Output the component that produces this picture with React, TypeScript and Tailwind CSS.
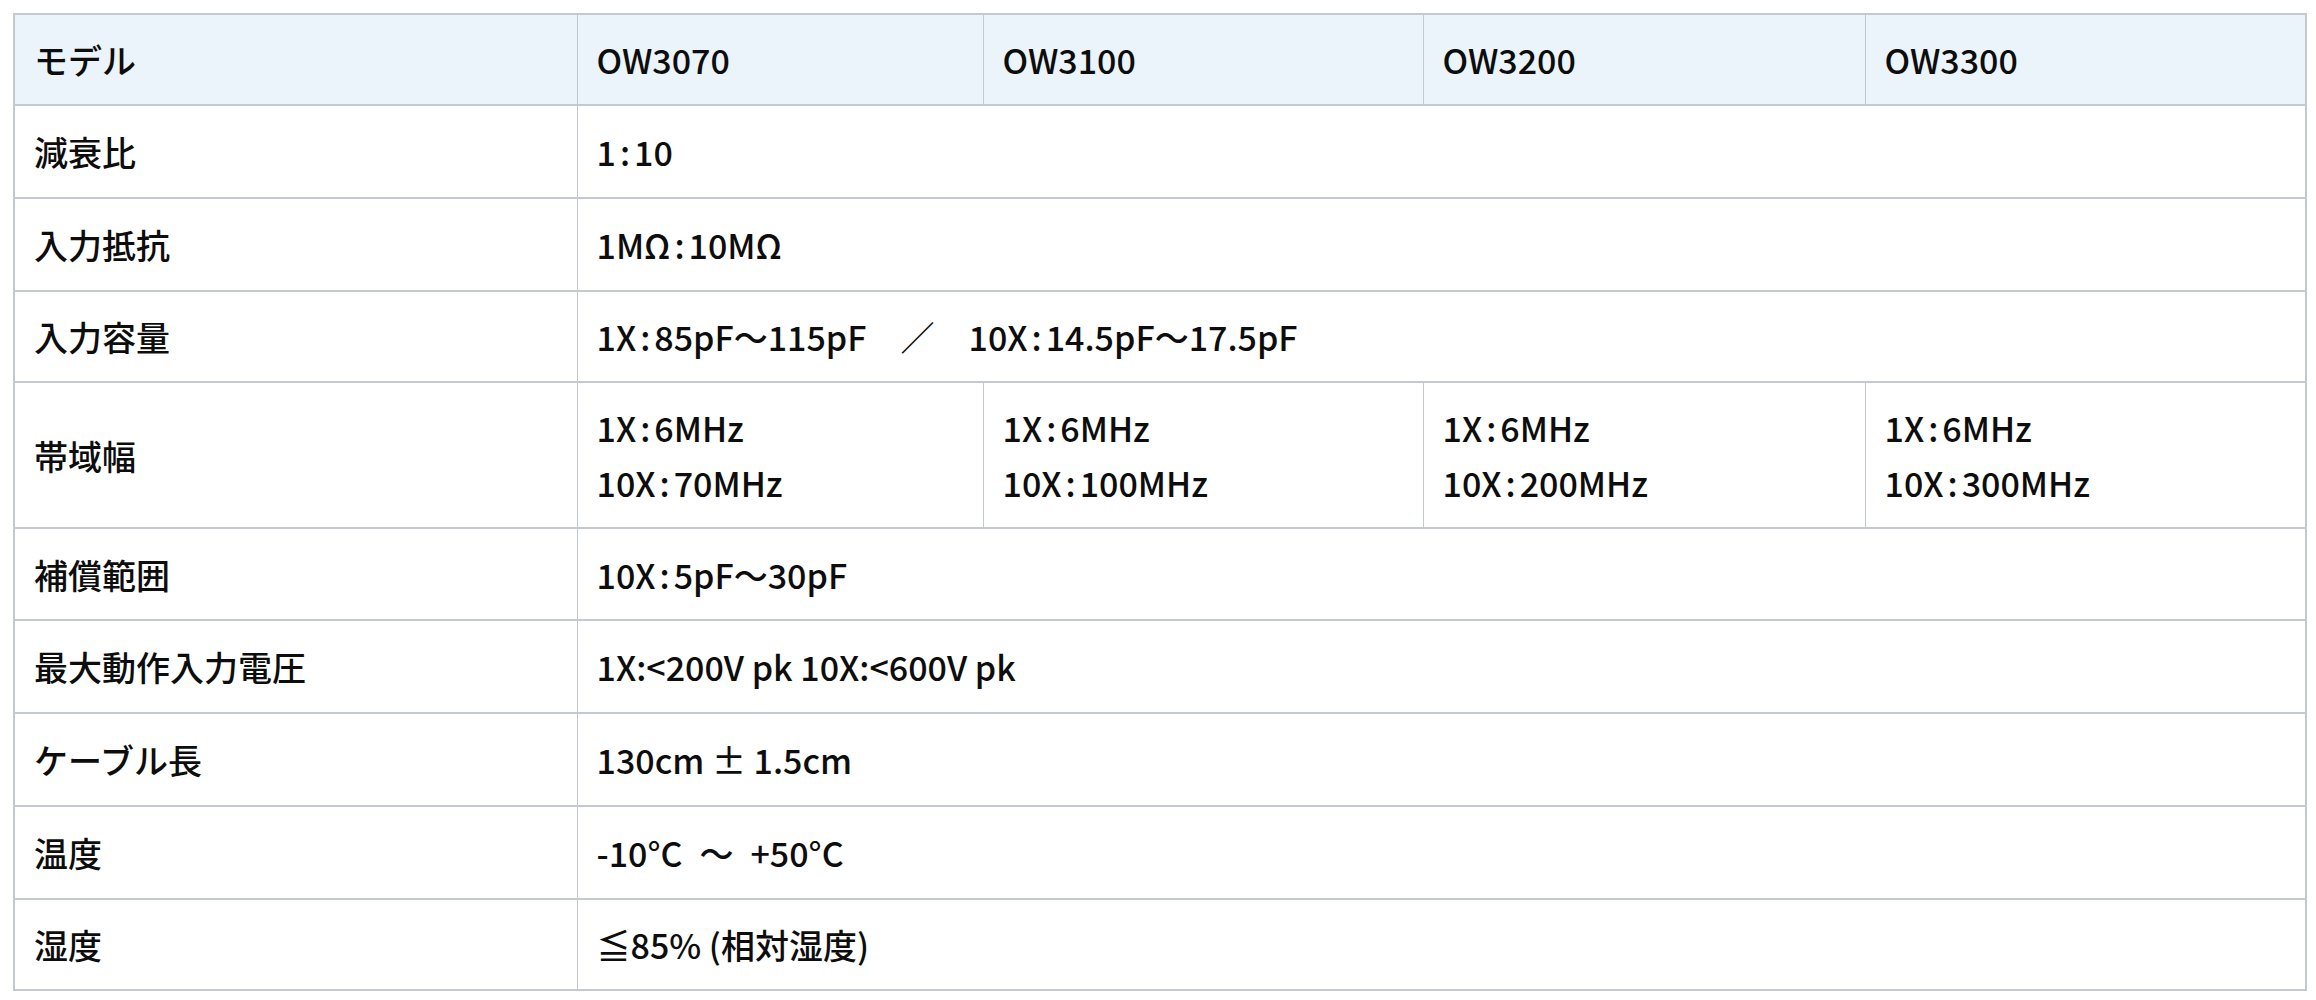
import React from "react";

const models = ["OW3070", "OW3100", "OW3200", "OW3300"];

// spec rows: label + either one value spanning all models, or one per model
const specs: {
  label: string;
  value?: string;
  perModel?: string[][];
  h: string;
  tight?: boolean;
}[] = [
  { label: "減衰比", value: "1:10", h: "h-[93px]" },
  { label: "入力抵抗", value: "1MΩ:10MΩ", h: "h-[93px]" },
  { label: "入力容量", value: "1X:85pF～115pF　／　10X:14.5pF～17.5pF", h: "h-[91px]" },
  {
    label: "帯域幅",
    perModel: [
      ["1X:6MHz", "10X:70MHz"],
      ["1X:6MHz", "10X:100MHz"],
      ["1X:6MHz", "10X:200MHz"],
      ["1X:6MHz", "10X:300MHz"],
    ],
    h: "h-[146px]",
  },
  { label: "補償範囲", value: "10X:5pF～30pF", h: "h-[92px]" },
  { label: "最大動作入力電圧", value: "1X:<200V pk 10X:<600V pk", h: "h-[93px]", tight: true },
  { label: "ケーブル長", value: "130cm ± 1.5cm", h: "h-[93px]" },
  { label: "温度", value: "-10°C\u2002～\u2002+50°C", h: "h-[93px]" },
  { label: "湿度", value: "≦85% (相対湿度)", h: "h-[91px]" },
];

const cell = "border-y-2 border-x border-[#c4c8cf] pl-[19px] align-middle";

// half-width colons in the source sit with a little air around them
const Spaced = ({ text, tight }: { text: string; tight?: boolean }) => {
  if (tight) return <>{text}</>;
  const parts = text.split(":");
  return (
    <>
      {parts.map((p, i) => (
        <React.Fragment key={i}>
          {i > 0 && <span className="mx-[4px]">:</span>}
          {p}
        </React.Fragment>
      ))}
    </>
  );
};

const App = () => {
  return (
    <div className="min-h-screen bg-white pt-[13px] pl-[13px] text-[34px] leading-[55px] font-medium text-[#0d0d0d] font-['Noto_Sans_CJK_JP','Noto_Sans',sans-serif]">
      <table className="table-fixed border-collapse w-[2292px] border-2 border-[#c4c8cf]">
        <colgroup>
          <col className="w-[563px]" />
          <col className="w-[406px]" />
          <col className="w-[440px]" />
          <col className="w-[442px]" />
          <col className="w-[441px]" />
        </colgroup>
        <thead>
          <tr className="h-[91px] bg-[#eaf4fa]">
            <th className={`${cell} text-left font-medium`}>モデル</th>
            {models.map((m) => (
              <th key={m} className={`${cell} text-left font-medium`}>
                {m}
              </th>
            ))}
          </tr>
        </thead>
        <tbody>
          {specs.map((row) => (
            <tr key={row.label} className={row.h}>
              <td className={cell}>{row.label}</td>
              {row.perModel ? (
                row.perModel.map((lines, i) => (
                  <td key={i} className={cell}>
                    {lines.map((l) => (
                      <div key={l}>
                        <Spaced text={l} />
                      </div>
                    ))}
                  </td>
                ))
              ) : (
                <td colSpan={4} className={`${cell} whitespace-pre`}>
                  <Spaced text={row.value ?? ""} tight={row.tight} />
                </td>
              )}
            </tr>
          ))}
        </tbody>
      </table>
    </div>
  );
};

export default App;
